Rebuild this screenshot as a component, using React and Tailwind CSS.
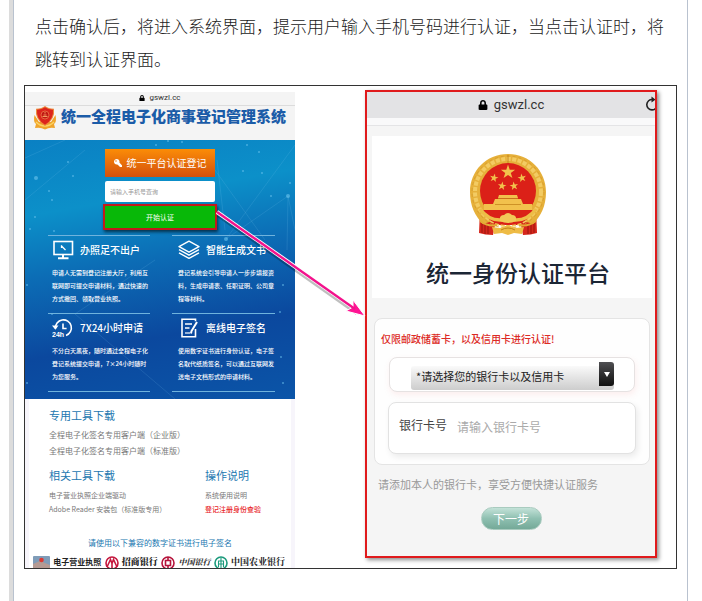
import React from "react";
import { FaKey, FaLock } from "react-icons/fa";

const STAR = "M0 -10 L2.3 -3.1 L9.5 -3.1 L3.7 1.2 L5.9 8.1 L0 3.9 L-5.9 8.1 L-3.7 1.2 L-9.5 -3.1 L-2.3 -3.1 Z";

const DOTS = [
  [11, 38, 2], [43, 22, 1], [48, 36, 1], [27, 60, 1], [24, 51, 1], [29, 91, 1], [10, 77, 1],
  [131, 5, 1], [157, 2, 1], [143, 1, 1], [218, 31, 1], [234, 12, 1], [237, 33, 1], [263, 56, 2],
  [265, 43, 1], [201, 99, 2], [5, 89, 1], [2, 145, 1], [258, 145, 1], [255, 172, 1], [256, 217, 1],
  [2, 243, 1], [258, 243, 1], [27, 174, 1], [222, 5, 1], [246, 56, 1],
];

const SERVICES = [
  {
    title: "办照足不出户",
    Icon: MonitorIcon,
    text: "申请人无需到登记注册大厅，利用互联网即可提交申请材料，通过快速的方式撤回、领取营业执照。",
  },
  {
    title: "智能生成文书",
    Icon: StackIcon,
    text: "登记系统会引导申请人一步步填报资料，生成申请表、任职证明、公司章程等材料。",
  },
  {
    title: "7X24小时申请",
    Icon: AllDayIcon,
    text: "不分白天黑夜，随时通过全程电子化登记系统提交申请，7×24小时随时为您服务。",
  },
  {
    title: "离线电子签名",
    Icon: SignIcon,
    text: "使用数字证书进行身份认证，电子签名取代纸质签名，可以通过互联网发送电子文档形式的申请材料。",
  },
];

function MonitorIcon() {
  return (
    <svg viewBox="0 0 22 20" className="w-[22px] h-5 shrink-0" fill="none" stroke="white" strokeWidth="1.6">
      <rect x="2" y="1.5" width="18.5" height="13" />
      <path d="M11 14.5V18M6 18.3h10.500" strokeWidth="2" />
      <path d="M9.500 6l4 4M9.500 5.200v2.800" strokeWidth="1.3" />
    </svg>
  );
}

function StackIcon() {
  return (
    <svg viewBox="0 0 22 20" className="w-[22px] h-5 shrink-0" fill="none" stroke="white" strokeWidth="1.4" strokeLinejoin="round">
      <path d="M11 1.2l10 5.500-10 5.500-10-5.500z" />
      <path d="M1 9.700l10 5.500 10-5.500" />
      <path d="M1 12.900l10 5.500 10-5.500" />
    </svg>
  );
}

function AllDayIcon() {
  return (
    <svg viewBox="0 0 22 20" className="w-[22px] h-5 shrink-0" fill="none" stroke="white" strokeWidth="1.6">
      <path d="M3.4 10.5A8 8 0 1 1 14 17.4" />
      <path d="M0 7.500h6.500L3.400 11.800z" fill="white" stroke="none" />
      <path d="M11 5.500v5h3.600" />
      <text x="0" y="19" fontSize="7" fontWeight="700" fontFamily="Liberation Sans, sans-serif" fill="white" stroke="none">
        24h
      </text>
    </svg>
  );
}

function SignIcon() {
  return (
    <svg viewBox="0 0 22 20" className="w-[22px] h-5 shrink-0" fill="none" stroke="white" strokeWidth="1.6">
      <path d="M17.500 11v7.700H4V1.300h13.500v2" />
      <path d="M7 6h7M7 10h4.500" />
      <path d="M19 4l-5.500 9-.500 2.500" strokeWidth="2" />
      <path d="M7 15h5" strokeWidth="1.2" />
    </svg>
  );
}

function ShieldLogo() {
  return (
    <svg viewBox="0 0 24 24" className="w-6 h-6 shrink-0" aria-hidden="true">
      <path d="M1.5 9Q0 16 3 18L2 22Q8 21 12 23.500Q16 21 22 22L21 18Q24 16 22.500 9L18 16H6z" fill="#f0a52c" />
      <path d="M3 16q4 4 9 4t9-4" fill="none" stroke="#fbd465" strokeWidth="1.5" />
      <path d="M12 0Q15 2.500 21 2.700Q22.500 13.500 12 20Q1.500 13.500 3 2.700Q9 2.500 12 0z" fill="#ee8a3c" />
      <path d="M12 1.200Q15 3.500 20 3.700Q21 13 12 18.700Q3 13 4 3.700Q9 3.500 12 1.200z" fill="#dc241c" />
      <circle cx="12" cy="9" r="4" fill="#c01713" stroke="#ef7a4a" strokeWidth="0.8" />
      <path d="M9.5 10.5h5M10.5 9h3M12 6v1.5" stroke="#f8a868" strokeWidth="0.9" />
    </svg>
  );
}

function NationalEmblem() {
  return (
    <svg viewBox="0 0 76 82" className="w-[76px] h-[82px]" role="img" aria-label="国徽">
      <path d="M10 56L9 79q6 2 14 2l2-10h26l2 10q8 0 14-2l-1-23z" fill="#d6261c" />
      <path d="M12 68v11M15 69v11M18 70v10M58 70v10M61 69v11M64 68v11" stroke="#9f1710" strokeWidth="1.1" />
      <path d="M38 0C60 0 76 17 76 38C76 52 71 62 63 70L38 62L13 70C5 62 0 52 0 38C0 17 16 0 38 0z" fill="#e6b03a" />
      <circle cx="38" cy="38" r="33" fill="none" stroke="#f3cb62" strokeWidth="4" strokeDasharray="4 1.5" />
      <circle cx="38" cy="38" r="36" fill="none" stroke="#d49a2b" strokeWidth="0.8" strokeDasharray="3 3" />
      <path d="M38 1v8" stroke="#c58a20" strokeWidth="1" />
      <circle cx="38" cy="37" r="28" fill="#db2018" />
      <g fill="#f2c14c">
        <path d={STAR} transform="translate(38 18) scale(0.75)" />
        <path d={STAR} transform="translate(24 24) rotate(12) scale(0.45)" />
        <path d={STAR} transform="translate(52 24) rotate(-12) scale(0.45)" />
        <path d={STAR} transform="translate(32 32) rotate(8) scale(0.45)" />
        <path d={STAR} transform="translate(44 32) rotate(-8) scale(0.45)" />
        <path d="M29 41h18l1 3H28zM25 45h26l2 5H23zM14 50h48v6H14z" />
      </g>
      <path d="M25 50.5h26M28 44.500h20" stroke="#c4861d" strokeWidth="0.8" />
      <path d="M13 56h50q-5 15-25 15T13 56z" fill="#db2018" />
      <path d="M10 55q8 11 20 11h16q12 0 20-11" fill="none" stroke="#edbd47" strokeWidth="3.5" />
      <path d="M30 67q-1-6 4-6 4-4 8 0 5 0 4 6-8 4-16 0z" fill="#f2c958" />
      <path d="M10 67q8 6 17 4M66 67q-8 6-17 4" stroke="#e3ab35" strokeWidth="2" fill="none" />
      <path d="M22 73l8 1 8-3 8 3 8-1-2 7-8-1-6 2-6-2-8 1z" fill="#eebb45" />
      <path d="M31 76q7-4 14 0" stroke="#bf7f1a" fill="none" />
    </svg>
  );
}

function ReloadIcon() {
  return (
    <svg viewBox="0 0 14 16" className="absolute -right-1 top-1 w-[14px] h-4" fill="none" stroke="#222" strokeWidth="1.6">
      <path d="M7.5 3.5A5.2 5.2 0 1 0 12.2 8.5" />
      <path d="M6.5 0.5l4 3-4 3z" fill="#222" stroke="none" />
    </svg>
  );
}

function BankMark({ color, children }) {
  return (
    <svg viewBox="0 0 14 14" className="w-[14px] h-[14px] shrink-0" fill="none" stroke={color} strokeWidth="1.6" aria-hidden="true">
      <circle cx="7" cy="7" r="6" />
      {children}
    </svg>
  );
}

function Network() {
  return (
    <svg viewBox="0 0 270 259" preserveAspectRatio="xMidYMid slice" className="absolute inset-0 w-full h-full" fill="none" aria-hidden="true">
      <g stroke="#8fd3f5" strokeOpacity="0.2" strokeWidth="0.7">
        <path d="M0 18L40 0M0 60L60 10M190 30L240 100M270 5L201 99L263 56L270 90M263 56L262 110M200 90L192 20M50 174L130 120M50 174L150 259" />
      </g>
      {DOTS.map(([x, y, r]) => (
        <circle key={`${x}-${y}`} cx={x} cy={y} r={r} fill="#6ec5ee" fillOpacity="0.6" />
      ))}
    </svg>
  );
}

function Service({ title, text, Icon }) {
  return (
    <section className="h-[78px] border-t border-[#6fb3dd] pl-1 pt-1 text-white even:pl-[6px]">
      <h3 className="flex items-center gap-[6px] text-[10px] leading-5 font-medium whitespace-nowrap">
        <Icon />
        {title}
      </h3>
      <p className="mt-[6px] text-[6px] leading-[13px] font-medium">{text}</p>
    </section>
  );
}

function RegistryPhone() {
  return (
    <div className="mt-[6px] h-[476px] min-w-0 overflow-hidden bg-white">
      <div className="flex h-[14px] items-center justify-center gap-1 border-b border-[#dcdcdc] bg-[#f4f4f4] pb-[2px] font-[Roboto,sans-serif] text-[8px] leading-[10px] text-[#333]">
        <FaLock size={6} className="text-black" />
        gswzl.cc
      </div>
      <header className="flex h-[34px] items-start gap-1 bg-[#f4f4f4] pl-2">
        <ShieldLogo />
        <h1 className="text-[15px] leading-5 font-black text-[#1b5ca8] whitespace-nowrap">统一全程电子化商事登记管理系统</h1>
      </header>

      <div className="relative h-[259px] bg-[linear-gradient(170deg,#0a80c3_0%,#0c90c9_25%,#0c6cb5_46%,#0b489e_72%,#0b55a8_100%)]">
        <Network />
        <form className="relative mx-auto flex w-[114px] flex-col pt-[9px]">
          <button
            type="button"
            className="mx-[2px] flex h-7 items-center justify-center gap-[5px] bg-gradient-to-b from-[#fb8c06] to-[#d4500c] text-[10px] leading-4 text-white whitespace-nowrap"
          >
            <FaKey size={8} className="-scale-x-100" />
            统一平台认证登记
          </button>
          <input
            aria-label="手机号"
            placeholder="请输入手机号查询"
            className="mx-[2px] mt-1 h-[21px] rounded-[2px] bg-white px-[5px] text-[6px] outline-none placeholder:text-[#999]"
          />
          <button type="button" className="mt-[2px] h-[26px] border-2 border-[#c3191b] bg-[#08b808] text-[7px] text-white shadow-[1px_2px_3px_rgba(0,0,0,0.6)]">
            开始认证
          </button>
        </form>
        <div className="relative mx-[23px] mt-[5px] mr-5 grid grid-cols-[102fr_103fr] gap-x-[22px]">
          {SERVICES.map((service) => (
            <Service key={service.title} {...service} />
          ))}
          <div className="border-t border-[#6fb3dd]" />
          <div className="border-t border-[#6fb3dd]" />
        </div>
      </div>

      <div className="border-x-4 border-[#f7f5fb] pt-[7px] text-[#777]">
        <div className="pl-5">
          <h2 className="text-[11px] leading-[18px] text-[#2277b0]">专用工具下载</h2>
          <ul className="mt-[3px] text-[8px] leading-4">
            <li><a href="#enterprise">全程电子化签名专用客户端（企业版）</a></li>
            <li><a href="#standard">全程电子化签名专用客户端（标准版）</a></li>
          </ul>
          <div className="mt-[7px] grid grid-cols-[156fr_86fr] whitespace-nowrap">
            <div>
              <h2 className="text-[11px] leading-[18px] text-[#2277b0]">相关工具下载</h2>
              <ul className="mt-1 text-[7px] leading-[14px]">
                <li><a href="#driver">电子营业执照企业端驱动</a></li>
                <li><a href="#reader">Adobe Reader 安装包（标准版专用）</a></li>
              </ul>
            </div>
            <div>
              <h2 className="text-[11px] leading-[18px] text-[#2277b0]">操作说明</h2>
              <ul className="mt-1 text-[7px] leading-[14px]">
                <li><a href="#manual">系统使用说明</a></li>
                <li><a href="#verify" className="font-medium text-[#e8262a]">登记注册身份查验</a></li>
              </ul>
            </div>
          </div>
        </div>
        <p className="mt-[19px] text-center text-[8px] leading-4 text-[#2277b0]">请使用以下兼容的数字证书进行电子签名</p>
        <div className="mt-[5px] flex h-3 items-start justify-between overflow-hidden pl-1 pr-[6px] leading-3 text-[#222] whitespace-nowrap">
          <svg viewBox="0 0 17 14" className="w-[17px] h-[14px] shrink-0" aria-hidden="true">
            <rect width="17" height="14" rx="1" fill="#7f9cb8" />
            <path d="M0 8l7-3 10 4v5H0z" fill="#b59a93" />
            <circle cx="8.5" cy="4" r="2.3" fill="#dc3a33" />
          </svg>
          <span className="text-[8px] font-bold">电子营业执照</span>
          <BankMark color="#c4173d">
            <path d="M2 11L5.5 3.5L7 7.5L8.5 3.5L12 11M7 7v6" />
          </BankMark>
          <span className="font-['Noto_Serif_CJK_SC','Noto_Sans_CJK_SC',serif] text-[9px] font-black">招商银行</span>
          <BankMark color="#b5123a">
            <path d="M7 1v3M7 10v3M4.5 4.5h5v5h-5z" />
          </BankMark>
          <span className="font-['Noto_Serif_CJK_SC','Noto_Sans_CJK_SC',serif] text-[8px] font-bold italic">中国银行</span>
          <BankMark color="#1c9a7c">
            <path d="M7 2v11M4 5h6M4.5 5v6M9.5 5v6M4.5 8h5" strokeWidth="1.1" />
          </BankMark>
          <span className="font-['Noto_Serif_CJK_SC','Noto_Sans_CJK_SC',serif] text-[9px] font-bold">中国农业银行</span>
        </div>
      </div>
    </div>
  );
}

function VerifyPhone() {
  return (
    <div className="mt-1 h-[468px] min-w-0 overflow-hidden border-2 border-[#e01a1c] bg-[#f5f5f5] shadow-[2px_2px_4px_rgba(0,0,0,0.45)]">
      <div className="relative flex h-[26px] items-center justify-center gap-[6px] bg-[#e3e3e5] font-[Roboto,sans-serif] text-[13px] leading-5 text-[#333]">
        <FaLock size={10} className="text-black" />
        gswzl.cc
        <ReloadIcon />
      </div>
      <div className="h-2 border-b border-[#e4e4e6] bg-[#f9f9fa]" />

      <div className="ml-[5px] mr-[3px] mt-[10px] flex h-[162px] flex-col items-center bg-white pt-[18px]">
        <div className="pr-2">
          <NationalEmblem />
        </div>
        <h1 className="mt-5 pl-3 text-[23px] leading-8 font-medium text-[#1b2635] whitespace-nowrap">统一身份认证平台</h1>
      </div>

      <form className="mt-5">
        <div className="ml-[7px] mr-[5px] h-[147px] rounded-lg border border-[#e4e4e4] bg-[#fefefe]">
          <p className="ml-[6px] mt-3 text-[10px] leading-4 font-medium text-[#dc2a25] whitespace-nowrap">仅限邮政储蓄卡，以及信用卡进行认证!</p>
          <div className="ml-[14px] mr-[14px] mt-[10px] flex h-[35px] rounded-lg border border-[#e6e2e2] bg-white py-1 pl-[21px] pr-5 shadow-[1px_3px_6px_rgba(240,150,150,0.15)]">
            <div className="relative flex-1">
              <select
                aria-label="银行卡"
                className="h-6 w-full appearance-none rounded-[3px] bg-gradient-to-b from-[#fafafa] to-[#cdcdcd] pb-1 pl-[5px] text-[11px] text-[#222] outline-none"
              >
                <option>*请选择您的银行卡以及信用卡</option>
              </select>
              <span className="pointer-events-none absolute right-0 top-0 flex h-6 w-[15px] items-center justify-center rounded-r-[3px] bg-gradient-to-b from-[#505053] to-[#111]">
                <svg viewBox="0 0 6 5" className="w-[6px] h-[5px]">
                  <path d="M0 0h6L3 5z" fill="white" />
                </svg>
              </span>
            </div>
          </div>
          <div className="mx-[13px] mt-[10px] flex h-[52px] rounded-lg border border-[#e2e2e2] bg-white pl-[10px] pt-3 text-[12px] leading-5 shadow-[2px_3px_6px_rgba(0,0,0,0.08)]">
            <label htmlFor="card" className="shrink-0 text-[#444]">银行卡号</label>
            <input
              id="card"
              placeholder="请输入银行卡号"
              className="ml-[10px] mt-[2px] h-5 min-w-0 flex-1 bg-transparent outline-none placeholder:text-[#aaa]"
            />
          </div>
        </div>
        <p className="ml-[11px] mt-[10px] text-[11px] leading-[18px] text-[#999] whitespace-nowrap">请添加本人的银行卡，享受方便快捷认证服务</p>
        <button
          type="button"
          className="mx-auto mt-[14px] block h-[23px] w-[61px] rounded-full border border-[#a9cbbf] bg-gradient-to-b from-[#c3e2d8] via-[#8fc0b1] to-[#74a998] text-[12px] leading-5 text-white"
        >
          下一步
        </button>
      </form>
    </div>
  );
}

function Arrow() {
  return (
    <svg viewBox="0 0 651 482" preserveAspectRatio="none" className="pointer-events-none absolute inset-0 w-full h-full" aria-hidden="true">
      <path d="M193 129L332 227" stroke="#000" strokeOpacity="0.25" strokeWidth="4" />
      <path d="M192 126L329 222" stroke="#fff" strokeWidth="4" />
      <path d="M340 230L321 225L328 221L328 214z" fill="#ff1493" stroke="#fff" strokeWidth="1" />
      <path d="M192 126L330 223" stroke="#f3128c" strokeWidth="2.4" />
    </svg>
  );
}

export default function App() {
  return (
    <div className="min-h-screen bg-white pl-[9px] pr-[14px] font-['Noto_Sans_CJK_SC',sans-serif]">
      <main className="flex min-h-screen border-l-4 border-[#dcdcdc]">
        <article className="min-w-0 flex-1 border-x border-[#b9c2cf] px-[10px] pt-[9px]">
          <p className="mb-[10px] pl-[11px] pr-2 text-[17px] leading-[33px] font-light text-[#222]">
            点击确认后，将进入系统界面，提示用户输入手机号码进行认证，当点击认证时，将跳转到认证界面。
          </p>
          <figure className="relative grid grid-cols-[270fr_292fr] gap-x-[70px] border border-[#333] bg-white pr-[19px]">
            <RegistryPhone />
            <VerifyPhone />
            <Arrow />
          </figure>
        </article>
      </main>
    </div>
  );
}
